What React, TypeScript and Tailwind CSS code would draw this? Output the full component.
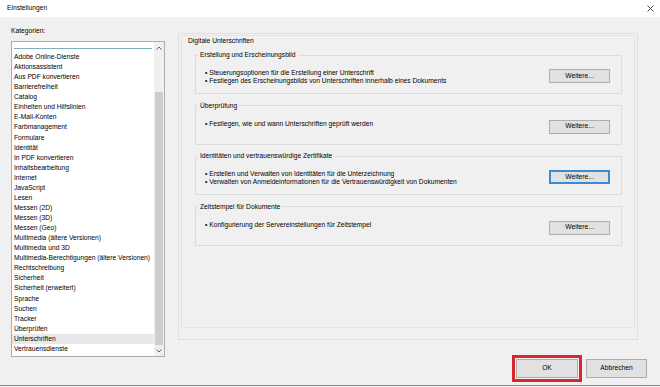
const categories = [
  "Adobe Online-Dienste",
  "Aktionsassistent",
  "Aus PDF konvertieren",
  "Barrierefreiheit",
  "Catalog",
  "Einheiten und Hilfslinien",
  "E-Mail-Konten",
  "Farbmanagement",
  "Formulare",
  "Identität",
  "In PDF konvertieren",
  "Inhaltsbearbeitung",
  "Internet",
  "JavaScript",
  "Lesen",
  "Messen (2D)",
  "Messen (3D)",
  "Messen (Geo)",
  "Multimedia (ältere Versionen)",
  "Multimedia und 3D",
  "Multimedia-Berechtigungen (ältere Versionen)",
  "Rechtschreibung",
  "Sicherheit",
  "Sicherheit (erweitert)",
  "Sprache",
  "Suchen",
  "Tracker",
  "Überprüfen",
  "Unterschriften",
  "Vertrauensdienste",
];

const groups = [
  {
    title: "Erstellung und Erscheinungsbild",
    lines: [
      "Steuerungsoptionen für die Erstellung einer Unterschrift",
      "Festlegen des Erscheinungsbilds von Unterschriften innerhalb eines Dokuments",
    ],
  },
  {
    title: "Überprüfung",
    lines: ["Festlegen, wie und wann Unterschriften geprüft werden"],
  },
  {
    title: "Identitäten und vertrauenswürdige Zertifikate",
    lines: [
      "Erstellen und Verwalten von Identitäten für die Unterzeichnung",
      "Verwalten von Anmeldeinformationen für die Vertrauenswürdigkeit von Dokumenten",
    ],
    focused: true,
  },
  {
    title: "Zeitstempel für Dokumente",
    lines: ["Konfigurierung der Servereinstellungen für Zeitstempel"],
  },
];

const CategoryList = () => {
  return (
    <div className="flex h-[316px] border border-[#adadad] bg-white">
      <div className="flex-1">
        <div className="h-[10px] pt-[6px] px-[2px]">
          <div className="h-px bg-[#7fb0bd]" />
        </div>
        {categories.map((c) => (
          <div
            key={c}
            className={
              "pl-[2px] leading-[10.07px] h-[10.07px] whitespace-nowrap " +
              (c === "Unterschriften" ? "bg-[#e9e9e9]" : "")
            }
          >
            {c}
          </div>
        ))}
      </div>
      <div className="flex w-[10px] flex-col bg-[#f0f0f0]">
        <div className="flex h-[11px] items-center justify-center">
          <svg width="6" height="4" viewBox="0 0 6 4">
            <path d="M0.5 3.5 L3 1 L5.5 3.5" fill="none" stroke="#606060" strokeWidth="1" />
          </svg>
        </div>
        <div className="flex flex-1 flex-col justify-end px-[1px] pb-[1px]">
          <div className="h-[253px] bg-[#cdcdcd]" />
        </div>
        <div className="flex h-[10px] items-center justify-center">
          <svg width="6" height="4" viewBox="0 0 6 4">
            <path d="M0.5 0.5 L3 3 L5.5 0.5" fill="none" stroke="#606060" strokeWidth="1" />
          </svg>
        </div>
      </div>
    </div>
  );
};

const WinButton = ({ label, focused, className }: { label: string; focused?: boolean; className?: string }) => {
  return (
    <button
      className={
        "flex items-center justify-center bg-[#e1e1e1] text-black " +
        (focused ? "border-2 border-[#3b8ad2] " : "border border-[#adadad] ") +
        (className ?? "")
      }
    >
      {label}
    </button>
  );
};

const App = () => {
  return (
    <div
      className="flex h-[387px] w-[660px] flex-col overflow-hidden bg-[#f0f0f0] text-[6.7px] text-black"
      style={{ fontFamily: '"Liberation Sans", Arial, sans-serif' }}
    >
      {/* title bar */}
      <div className="flex h-[17px] items-center justify-between bg-white pl-[7px] pr-[6px]">
        <span>Einstellungen</span>
        <svg width="7" height="7" viewBox="0 0 7 7">
          <path d="M0.5 0.5 L6.5 6.5 M6.5 0.5 L0.5 6.5" stroke="#3a3a3a" strokeWidth="0.9" />
        </svg>
      </div>

      <div className="flex h-[338px] pl-[11px]">
        <div className="w-[154px] pt-[9px]">
          <div className="h-[10px] leading-[10px]">Kategorien:</div>
          <div className="mt-[5px]">
            <CategoryList />
          </div>
        </div>

        <div className="ml-[13px] pt-[16px]">
          <div className="h-[307px] w-[460px] border border-[#e0e0e0] pl-[2px] pr-[2px] pt-px">
            <div className="h-[293px] border border-[#e4e4e4]">
              <div className="pl-[6px] leading-[10px]">Digitale Unterschriften</div>
              <div className="ml-[13px] mr-[12px] mt-[4px] flex flex-col gap-[6.5px]">
                {groups.map((g) => (
                  <fieldset key={g.title} className="h-[44px] border border-[#dcdcdc]">
                    <legend className="ml-[2px] px-[2px] leading-[10px]">{g.title}</legend>
                    <div className="flex items-start justify-between pl-[9px] pr-[11px] pt-[9px]">
                      <div className="leading-[8px]">
                        {g.lines.map((l) => (
                          <div key={l} className="whitespace-nowrap">
                            • {l}
                          </div>
                        ))}
                      </div>
                      <WinButton label="Weitere..." focused={g.focused} className="h-[14px] w-[61px]" />
                    </div>
                  </fieldset>
                ))}
              </div>
            </div>
          </div>
        </div>
      </div>

      <div className="flex h-[27px] items-center justify-end gap-[4px] pr-[13px]">
        <div className="border-[3px] border-[#d7262e] p-px">
          <WinButton label="OK" className="h-[19px] w-[62px]" />
        </div>
        <WinButton label="Abbrechen" className="h-[19px] w-[61px]" />
      </div>
      <div className="mt-[3px] h-px bg-[#8a8a8a]" />
    </div>
  );
};

export default App;
